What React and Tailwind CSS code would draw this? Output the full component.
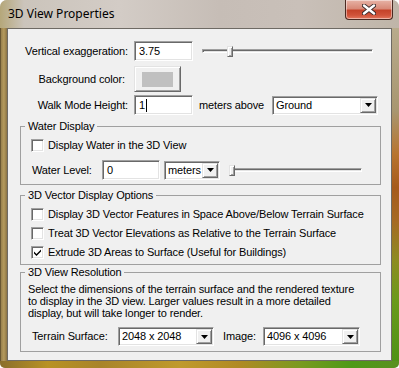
import React from "react";

const sunken =
  "bg-white border border-[#a0a0a0] border-b-white border-r-white shadow-[inset_1px_1px_0_#696969,inset_-1px_-1px_0_#e3e3e3]";
const raised =
  "bg-[#f0f0f0] border border-[#e3e3e3] border-b-[#696969] border-r-[#696969] shadow-[inset_1px_1px_0_#ffffff,inset_-1px_-1px_0_#a0a0a0]";

function Combo({ value, className }) {
  return (
    <div className={`flex h-[19px] p-[1px] ${sunken} ${className}`}>
      <div className="flex flex-1 items-center pl-[2px] leading-none">{value}</div>
      <div className={`flex w-[16px] items-center justify-center ${raised}`}>
        <svg width="7" height="4" viewBox="0 0 7 4">
          <path d="M0 0h7L3.5 4z" fill="#000" />
        </svg>
      </div>
    </div>
  );
}

function Checkbox({ checked }) {
  return (
    <div className={`flex h-[13px] w-[13px] shrink-0 items-center justify-center ${sunken}`}>
      {checked && (
        <svg width="7" height="7" viewBox="0 0 7 7">
          <path d="M0 2.5l2.5 2.5L7 0.5v2L2.5 7 0 4.5z" fill="#000" />
        </svg>
      )}
    </div>
  );
}

function Slider({ className, thumb }) {
  return (
    <div className={`relative flex h-[20px] items-center ${className}`}>
      <div className="h-[4px] w-full border border-[#a0a0a0] border-b-white border-r-white bg-[#e3e3e3] shadow-[inset_1px_1px_0_#696969]" />
      <div
        className={`absolute top-[5px] h-[11px] w-[6px] ${raised}`}
        style={{ left: thumb }}
      />
    </div>
  );
}

function Group({ title, className, children }) {
  return (
    <fieldset className={`ml-[12px] w-[361px] border border-[#a0a0a0] ${className}`}>
      <legend className="ml-[4px] px-[3px] leading-[13px]">{title}</legend>
      {children}
    </fieldset>
  );
}

export default function App() {
  return (
    <div className="flex h-[368px] w-[399px] flex-col overflow-hidden rounded-t-[7px] rounded-b-[5px] bg-[#c3bbb2] font-['Liberation_Sans',sans-serif] text-[11px] tracking-[-0.13px] text-black">
      {/* title bar */}
      <div className="flex h-[28px] shrink-0 justify-between bg-[linear-gradient(90deg,#b5a77a_0%,#cbc4bb_6%,#d3ccc6_30%,#c6bdb6_55%,#c9c0b9_75%,#bfb5a8_100%)]">
        <div className="pl-[8px] pt-[6px] font-['Noto_Sans',sans-serif] text-[12px] leading-[16px] tracking-normal text-black">
          3D View Properties
        </div>
        <div className="mr-[6px] flex h-[20px] w-[48px] items-center justify-center rounded-b-[4px] border border-t-0 border-[#4a2a22] bg-[linear-gradient(180deg,#e7b3a6_0%,#d88a78_45%,#c5432a_55%,#d0533a_80%,#e4785e_100%)] shadow-[inset_0_0_0_1px_rgba(255,255,255,0.45)]">
          <svg width="14" height="11" viewBox="0 0 14 11">
            <path d="M2 1.5l10 8M12 1.5l-10 8" stroke="#3a2a2a" strokeWidth="4.2" strokeLinecap="round" />
            <path d="M2 1.5l10 8M12 1.5l-10 8" stroke="#ffffff" strokeWidth="2.4" strokeLinecap="round" />
          </svg>
        </div>
      </div>

      <div className="flex flex-1">
        <div className="w-[7px] bg-[linear-gradient(90deg,#4d3e22_0%,#9c8450_20%,#b59a5c_55%,#8a7345_100%)]" />

        {/* client */}
        <div className="flex-1 border border-[#6e6a64] bg-[#f0f0f0]">
          <div className="flex items-center pt-[12px]">
            <div className="w-[126px] pr-[6px] text-right">Vertical exaggeration:</div>
            <div className={`flex h-[20px] w-[59px] items-center pl-[4px] ${sunken}`}>3.75</div>
            <Slider className="ml-[9px] w-[171px]" thumb={25} />
          </div>

          <div className="mt-[5px] flex items-center">
            <div className="w-[126px] pr-[9px] text-right">Background color:</div>
            <div className={`flex h-[26px] w-[47px] items-center justify-center ${raised}`}>
              <div className="h-[15px] w-[31px] bg-[#c0c0c0]" />
            </div>
          </div>

          <div className="mt-[3px] flex items-center">
            <div className="w-[126px] pr-[6px] text-right">Walk Mode Height:</div>
            <div className={`flex h-[20px] w-[59px] items-center pl-[4px] ${sunken}`}>
              1<span className="ml-[1px] h-[13px] w-[1px] bg-black" />
            </div>
            <div className="ml-[6px] w-[73px]">meters above</div>
            <Combo value="Ground" className="w-[106px]" />
          </div>

          <Group title="Water Display" className="mt-[5px] pb-[4px]">
            <div className="mt-[3px] flex h-[19px] items-center pl-[10px]">
              <Checkbox />
              <span className="ml-[4px]">Display Water in the 3D View</span>
            </div>
            <div className="mt-[5px] flex h-[20px] items-center pl-[11px]">
              <div className="w-[70px]">Water Level:</div>
              <div className={`flex h-[20px] w-[58px] items-center pl-[4px] ${sunken}`}>0</div>
              <Combo value="meters" className="ml-[4px] w-[56px]" />
              <Slider className="ml-[9px] w-[133px]" thumb={0} />
            </div>
          </Group>

          <Group title="3D Vector Display Options" className="mt-[4px] pb-[2px]">
            <div className="mt-[3px] flex h-[19px] items-center pl-[10px]">
              <Checkbox />
              <span className="ml-[4px]">Display 3D Vector Features in Space Above/Below Terrain Surface</span>
            </div>
            <div className="flex h-[19px] items-center pl-[10px]">
              <Checkbox />
              <span className="ml-[4px]">Treat 3D Vector Elevations as Relative to the Terrain Surface</span>
            </div>
            <div className="flex h-[19px] items-center pl-[10px]">
              <Checkbox checked />
              <span className="ml-[4px]">Extrude 3D Areas to Surface (Useful for Buildings)</span>
            </div>
          </Group>

          <Group title="3D View Resolution" className="mt-[1px] pb-[5px]">
            <p className="mt-[4px] whitespace-nowrap pl-[7px] leading-[12px]">
              Select the dimensions of the terrain surface and the rendered texture
              <br />
              to display in the 3D view. Larger values result in a more detailed
              <br />
              display, but will take longer to render.
            </p>
            <div className="mt-[8px] flex h-[19px] items-center pl-[11px]">
              <div className="w-[86px]">Terrain Surface:</div>
              <Combo value="2048 x 2048" className="w-[96px]" />
              <div className="ml-[9px] w-[40px]">Image:</div>
              <Combo value="4096 x 4096" className="w-[97px]" />
            </div>
          </Group>
        </div>

        <div className="w-[7px] bg-[linear-gradient(180deg,#b8ab8c_0%,#a89670_25%,#b8742e_38%,#a65a1c_48%,#a66a24_58%,#8c8c22_70%,#6a9a1c_82%,#4f9216_100%)]" />
      </div>

      <div className="h-[7px] shrink-0 bg-[linear-gradient(90deg,#8a6e2c_0%,#b89224_12%,#a8842a_25%,#c09a2c_45%,#b08a24_60%,#7a9a20_75%,#4e9a18_88%,#5a9020_100%)]" />
    </div>
  );
}
